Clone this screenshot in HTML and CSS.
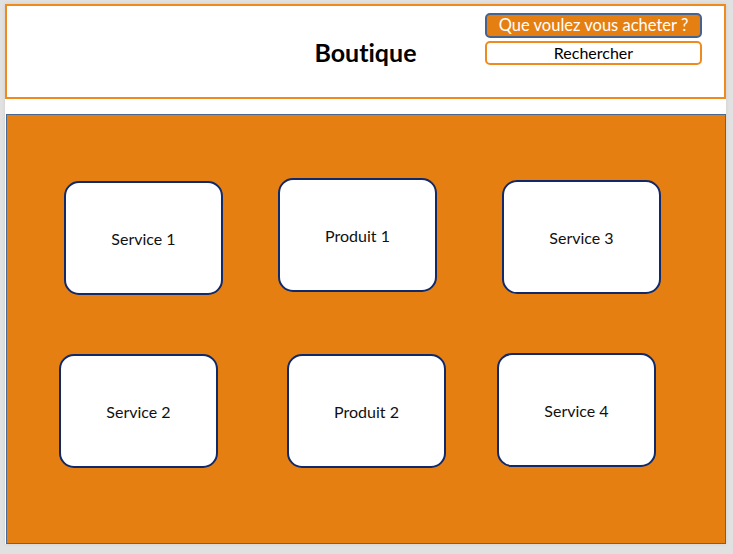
FILE: index.html
```html
<!DOCTYPE html>
<html lang="fr">
<head>
<meta charset="utf-8">
<title>Boutique</title>
<link rel="stylesheet" href="styles.css">
</head>
<body>
<div class="sheet">
  <header class="header">
    <div class="spacer"></div>
    <h1 class="title">Boutique</h1>
    <div class="search">
      <div class="ask">Que voulez vous acheter ?</div>
      <div class="find">Rechercher</div>
    </div>
  </header>
  <div class="gap"></div>
  <main class="panel">
    <div class="row row-1">
      <div class="card c1">Service 1</div>
      <div class="card c2">Produit 1</div>
      <div class="card c3">Service 3</div>
    </div>
    <div class="row row-2">
      <div class="card c4">Service 2</div>
      <div class="card c5">Produit 2</div>
      <div class="card c6">Service 4</div>
    </div>
  </main>
</div>
</body>
</html>
```
FILE: styles.css
```css
html, body {
  margin: 0;
  padding: 0;
}
body {
  background: #e1e1e1;
  width: 733px;
  height: 554px;
  overflow: hidden;
  font-family: "Lato", "Open Sans", sans-serif;
  font-variant-ligatures: none;
}
.sheet {
  margin: 4px 0 0 5px;
  width: 721px;
  height: 540px;
  background: #ffffff;
  box-shadow: 0 0 4px rgba(0,0,0,0.08);
}
.header {
  box-sizing: border-box;
  height: 95px;
  border: 2px solid #ef8a1f;
  display: grid;
  grid-template-columns: 1fr auto 1fr;
  align-items: center;
}
.title {
  margin: 0;
  font-size: 25px;
  font-weight: 700;
  color: #000;
  padding-top: 0;
}
.search {
  justify-self: end;
  align-self: start;
  margin: 7px 22px 0 0;
  display: flex;
  flex-direction: column;
  gap: 3px;
  width: 217px;
}
.ask {
  box-sizing: border-box;
  height: 25px;
  background: #e67f12;
  border: 2px solid #46638f;
  border-radius: 5px;
  color: #fff;
  font-size: 16.5px;
  line-height: 21px;
  text-align: center;
}
.find {
  box-sizing: border-box;
  height: 24px;
  background: #fff;
  border: 2px solid #ef8a1f;
  border-radius: 5px;
  color: #000;
  font-size: 16px;
  line-height: 20px;
  text-align: center;
}
.gap {
  height: 15px;
}
.panel {
  display: block;
  box-sizing: border-box;
  margin-left: 1px;
  width: 720px;
  height: 430px;
  background: #e67f12;
  border: 1px solid #4a6894;
}
.row {
  display: flex;
  align-items: flex-start;
}
.card {
  box-sizing: border-box;
  width: 159px;
  height: 114px;
  background: #fff;
  border: 2px solid #10296a;
  border-radius: 15px;
  display: flex;
  align-items: center;
  justify-content: center;
  font-size: 16px;
  color: #111;
}
.c1 { margin: 66px 0 0 57px; }
.c2 { margin: 63px 0 0 55px; }
.c3 { margin: 65px 0 0 65px; }
.c4 { margin: 59px 0 0 52px; }
.c5 { margin: 59px 0 0 69px; }
.c6 { margin: 58px 0 0 51px; }
```
